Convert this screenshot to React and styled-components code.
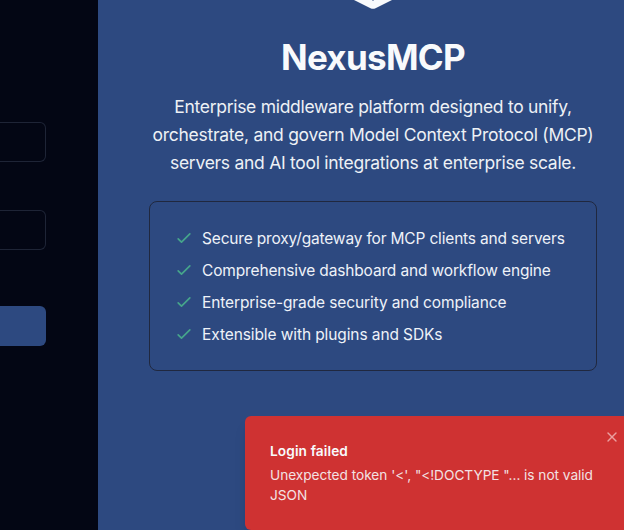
import React from 'react';
import styled, { createGlobalStyle } from 'styled-components';
import { X } from 'lucide-react';

const GlobalStyle = createGlobalStyle`
  *, *::before, *::after { box-sizing: border-box; }
  body {
    margin: 0;
    overflow: hidden;
    background: #030614;
    font-family: Inter, "Liberation Sans", sans-serif;
    color: #f8fafc;
  }
  h1, p, ul { margin: 0; padding: 0; }
`;

const Page = styled.div`
  position: relative;
  display: flex;
  width: 624px;
  height: 530px;
  overflow: hidden;
`;

const FormPane = styled.form`
  flex: 0 0 98px;
  display: flex;
  flex-direction: column;
  padding: 122px 52px 0 0;
  background: #030614;
`;

const Field = styled.input`
  width: 100%;
  height: 40px;
  margin-bottom: 48px;
  border: 1px solid #1e2436;
  border-left: 0;
  border-radius: 0 6px 6px 0;
  background: transparent;
  outline: none;
`;

const Submit = styled.button`
  width: 100%;
  height: 40px;
  margin-top: 8px;
  border: 0;
  border-radius: 0 6px 6px 0;
  background: #2d4980;
`;

const Hero = styled.section`
  flex: 0 0 550px;
  display: flex;
  flex-direction: column;
  align-items: center;
  background: #2d4980;
`;

const Logo = styled.svg`
  width: 64px;
  height: 10px;
  margin-bottom: 27px;
`;

const Title = styled.h1`
  font-size: 35px;
  line-height: 40px;
  font-weight: 700;
  margin-bottom: 16px;
`;

const Intro = styled.p`
  width: 448px;
  margin-bottom: 24px;
  text-align: center;
  font-size: 17.5px;
  line-height: 28px;
  opacity: 0.95;
`;

const Line = styled.span`
  display: ${(p) => (p.$inline ? 'inline' : 'block')};
  white-space: nowrap;
  letter-spacing: ${(p) => p.$track || 0}px;
`;

const Features = styled.ul`
  display: flex;
  flex-direction: column;
  gap: 8px;
  width: 448px;
  && { padding: 24px; }
  border: 1px solid #20283f;
  border-radius: 8px;
  list-style: none;
`;

const Feature = styled.li`
  display: flex;
  align-items: center;
  gap: 8px;
  height: 24px;
  font-size: 15.5px;
  line-height: 22px;
  color: #eef2f8;
  ${Line} { padding-top: 2px; }
`;

const CheckMark = styled.svg`
  flex: none;
  width: 20px;
  height: 20px;
  fill: none;
  stroke: #46a58b;
  stroke-width: 2;
  stroke-linecap: round;
  stroke-linejoin: round;
`;

const Toast = styled.div`
  position: absolute;
  left: 245px;
  top: 416px;
  width: 388px;
  height: 114px;
  padding: 25px;
  border-radius: 6px;
  background: #cf3232;
  box-shadow: 0 10px 15px -3px rgba(0, 0, 0, 0.1), 0 4px 6px -4px rgba(0, 0, 0, 0.1);
  font-size: 13.7px;
  line-height: 20px;
`;

const ToastTitle = styled.div`
  font-weight: 600;
  margin-bottom: 4px;
`;

const ToastText = styled.div`
  opacity: 0.88;
`;

const Close = styled.button`
  position: absolute;
  top: 13px;
  left: 359px;
  display: flex;
  padding: 0;
  border: 0;
  background: none;
  color: #eba0a0;
`;

const features = [
  ['Secure proxy/gateway for MCP clients and servers', -0.17],
  ['Comprehensive dashboard and workflow engine', -0.15],
  ['Enterprise-grade security and compliance', -0.11],
  ['Extensible with plugins and SDKs', -0.1],
];

const intro = [
  ['Enterprise middleware platform designed to unify,', -0.29],
  ['orchestrate, and govern Model Context Protocol (MCP)', -0.27],
  ['servers and AI tool integrations at enterprise scale.', -0.28],
];

export default function App() {
  return (
    <>
      <GlobalStyle />
      <Page>
        <FormPane>
          <Field aria-label="Username" />
          <Field aria-label="Password" type="password" />
          <Submit type="button" aria-label="Sign in" />
        </FormPane>
        <Hero>
          <Logo viewBox="0 0 64 10" aria-hidden="true">
            <path d="M13 0 L29.5 8.2 Q32 9.4 34.5 8.2 L51 0 Z" fill="#f8fafc" />
            <circle cx="32" cy="0" r="0.8" fill="#2d4980" />
          </Logo>
          <Title><Line $inline $track={-0.7}>NexusMCP</Line></Title>
          <Intro>
            {intro.map(([t, s]) => <Line key={t} $track={s}>{t}</Line>)}
          </Intro>
          <Features>
            {features.map(([t, s]) => (
              <Feature key={t}>
                <CheckMark viewBox="0 0 24 24" aria-hidden="true">
                  <path d="M5 13l4 4L19 7" />
                </CheckMark>
                <Line $track={s}>{t}</Line>
              </Feature>
            ))}
          </Features>
        </Hero>
        <Toast role="alert">
          <ToastTitle><Line $inline $track={0.1}>Login failed</Line></ToastTitle>
          <ToastText>
            <Line $track={-0.04}>{`Unexpected token '<', "<!DOCTYPE "... is not valid`}</Line>
            <Line $track={-0.04}>JSON</Line>
          </ToastText>
          <Close aria-label="Close"><X size={16} /></Close>
        </Toast>
      </Page>
    </>
  );
}
